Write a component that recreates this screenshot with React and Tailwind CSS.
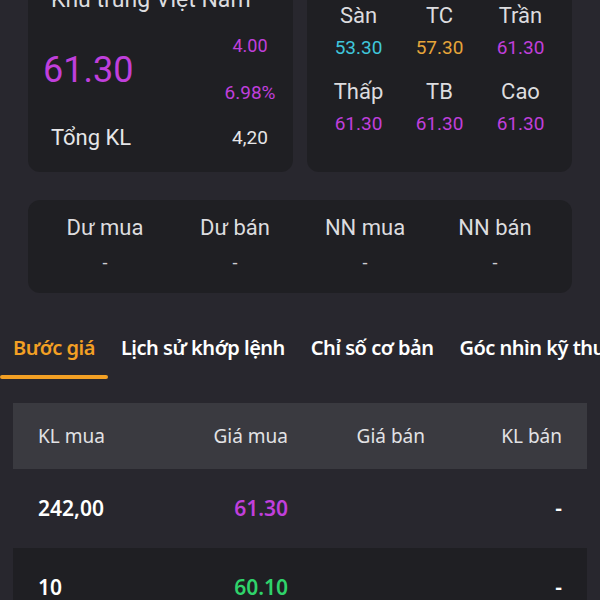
const priceStats = [
  [
    ["Sàn", "53.30", "text-[#3fc6dc]"],
    ["TC", "57.30", "text-[#e6a53a]"],
    ["Trần", "61.30", "text-[#c03fdc]"],
  ],
  [
    ["Thấp", "61.30", "text-[#c03fdc]"],
    ["TB", "61.30", "text-[#c03fdc]"],
    ["Cao", "61.30", "text-[#c03fdc]"],
  ],
];

const flowStats = ["Dư mua", "Dư bán", "NN mua", "NN bán"];

const tabs = ["Bước giá", "Lịch sử khớp lệnh", "Chỉ số cơ bản", "Góc nhìn kỹ thuật"];

const orderBook = [
  { buyVol: "242,00", buyPrice: "61.30", color: "text-[#c03fdc]", sellPrice: "", sellVol: "-" },
  { buyVol: "10", buyPrice: "60.10", color: "text-[#2fd36b]", sellPrice: "", sellVol: "-" },
];

const App = () => {
  return (
    <div className="h-[600px] w-[600px] overflow-hidden bg-[#28272e] text-[#e6e6e8]">
      <div className="-mt-[24px] px-7 font-['Roboto',sans-serif]">
        {/* thẻ giá + thẻ tham chiếu */}
        <div className="flex gap-[14px]">
          <div className="w-[265px] rounded-xl bg-[#1f1f23] pt-[10px] pb-[20px]">
            <div className="pl-[23px] text-[23px] leading-7 text-[#dcdcdf]">Khu trung Việt Nam</div>
            <div className="mt-[20px] flex h-[71px] items-center">
              <div className="flex-1 pl-[15px] text-[36px] leading-none text-[#c03fdc]">61.30</div>
              <div className="flex h-full w-[76px] flex-col justify-between text-center text-[18px] leading-6 text-[#c03fdc]">
                <span>4.00</span>
                <span className="text-[19px]">6.98%</span>
              </div>
              <div className="w-[5px]" />
            </div>
            <div className="mt-[19px] flex items-center leading-7">
              <div className="flex-1 pl-[23px] text-[22px]">Tổng KL</div>
              <div className="w-[76px] text-center text-[19px]">4,20</div>
              <div className="w-[5px]" />
            </div>
          </div>

          <div className="flex w-[265px] flex-col gap-4 rounded-xl bg-[#1f1f23] px-[11px] pt-[26px] pb-[34px]">
            {priceStats.map((row, i) => (
              <div key={i} className="grid grid-cols-3">
                {row.map(([label, value, color]) => (
                  <div key={label} className="flex flex-col items-center">
                    <span className="text-[22px] leading-7 text-[#dcdcdf]">{label}</span>
                    <span className={`mt-1 text-[19px] leading-7 ${color}`}>{value}</span>
                  </div>
                ))}
              </div>
            ))}
          </div>
        </div>

        {/* dư mua / dư bán */}
        <div className="mt-7 grid grid-cols-4 rounded-xl bg-[#1f1f23] px-3 pt-[14px] pb-[16px]">
          {flowStats.map((label) => (
            <div key={label} className="flex flex-col items-center">
              <span className="text-[22px] leading-7 text-[#dcdcdf]">{label}</span>
              <span className="mt-[7px] text-[18px] leading-7 text-[#cfcfd3]">-</span>
            </div>
          ))}
        </div>
      </div>

      {/* tabs */}
      <div className="mt-[37px] flex whitespace-nowrap font-['Noto_Sans',sans-serif] text-[20px] font-semibold tracking-[-0.5px]">
        {tabs.map((tab, i) => (
          <div key={tab} className="flex flex-col">
            <span className={`px-[13px] pt-1 leading-7 ${i === 0 ? "text-[#f3a024]" : "text-white"}`}>{tab}</span>
            <span className={`mt-[13px] h-[4px] rounded-full ${i === 0 ? "bg-[#f3a024]" : "bg-transparent"}`} />
          </div>
        ))}
      </div>

      {/* bảng bước giá */}
      <div className="mt-[24px] px-[13px] font-['Noto_Sans',sans-serif]">
        <div className="flex h-[66px] items-center bg-[#3a3a40] px-[25px] text-[19px] text-[#e2e2e5]">
          <div className="w-[130px]">KL mua</div>
          <div className="w-[120px] text-right">Giá mua</div>
          <div className="w-[137px] text-right">Giá bán</div>
          <div className="flex-1 text-right">KL bán</div>
        </div>
        {orderBook.map((row, i) => (
          <div
            key={i}
            className={`flex h-[79px] items-center px-[25px] text-[21px] font-semibold ${i % 2 === 1 ? "bg-[#1f1f23]" : ""}`}
          >
            <div className="w-[130px] text-white">{row.buyVol}</div>
            <div className={`w-[120px] text-right ${row.color}`}>{row.buyPrice}</div>
            <div className="w-[137px] text-right">{row.sellPrice}</div>
            <div className="flex-1 text-right text-white">{row.sellVol}</div>
          </div>
        ))}
      </div>
    </div>
  );
};

export default App;
